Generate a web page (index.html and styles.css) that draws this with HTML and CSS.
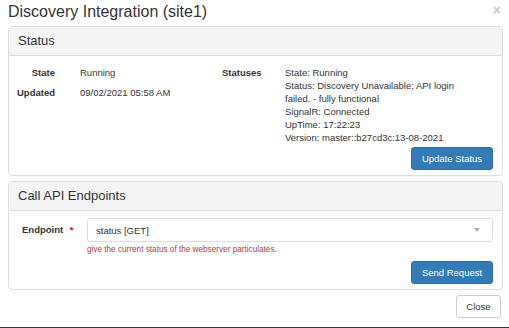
FILE: index.html
```html
<!DOCTYPE html>
<html>
<head>
<meta charset="utf-8">
<link rel="stylesheet" href="styles.css">
</head>
<body>
<div class="modal">
  <div class="modal-header">
    <h4 class="modal-title">Discovery Integration (site1)</h4>
    <span class="close">×</span>
  </div>
  <div class="modal-body">
    <div class="panel">
      <div class="panel-heading">Status</div>
      <div class="panel-body body-status">
        <div class="status-grid">
          <div class="col-left">
            <div class="row"><span class="lbl">State</span><span class="val">Running</span></div>
            <div class="row"><span class="lbl">Updated</span><span class="val">09/02/2021 05:58 AM</span></div>
          </div>
          <div class="col-right">
            <span class="lbl2">Statuses</span>
            <div class="statuses">
              <div>State: Running</div>
              <div>Status: Discovery Unavailable; API login failed. - fully functional</div>
              <div>SignalR: Connected</div>
              <div>UpTime: 17:22:23</div>
              <div>Version: master::b27cd3c:13-08-2021</div>
            </div>
          </div>
        </div>
        <div class="actions"><button class="btn btn-primary">Update Status</button></div>
      </div>
    </div>
    <div class="panel">
      <div class="panel-heading">Call API Endpoints</div>
      <div class="panel-body body-api">
        <div class="form-row">
          <label class="form-label">Endpoint <span class="req">*</span></label>
          <div class="field">
            <div class="select"><span>status [GET]</span><span class="caret"></span></div>
            <div class="help">give the current status of the webserver particulates.</div>
          </div>
        </div>
        <div class="actions"><button class="btn btn-primary">Send Request</button></div>
      </div>
    </div>
  </div>
  <div class="modal-footer"><button class="btn btn-default">Close</button></div>
</div>
</body>
</html>
```
FILE: styles.css
```css
* { box-sizing: border-box; }
html, body { margin: 0; padding: 0; background: #fff; }
body { font-family: "Liberation Sans", Arial, sans-serif; color: #333; width: 509px; height: 328px; overflow: hidden; }
.modal { width: 509px; height: 328px; border-bottom: 1px solid #333; }
.modal-header { display: flex; justify-content: space-between; align-items: flex-start; padding: 2px 8px 0 8px; height: 26px; }
.modal-title { margin: 0; font-weight: normal; font-size: 16px; line-height: 20px; color: #333; }
.close { color: #c8c8c8; font-size: 14px; font-weight: bold; line-height: 14px; margin-top: 1px; }
.modal-body { padding: 0 6px 0 8px; }
.panel { border: 1px solid #ddd; border-radius: 4px; margin-bottom: 5px; }
.panel-heading { background: #f5f5f5; border-bottom: 1px solid #ddd; height: 29px; padding: 6px 9px; font-size: 13px; line-height: 16px; border-radius: 3px 3px 0 0; }
.panel-body { font-size: 9.5px; line-height: 13px; }
.body-status { padding: 10px 9px 5px 8px; }
.body-api { padding: 7px 9px 5px 8px; }
.status-grid { display: flex; }
.col-left { width: 205px; flex-shrink: 0; }
.row { display: flex; margin-bottom: 7px; }
.lbl { width: 38px; text-align: right; font-weight: bold; }
.val { margin-left: 25px; }
.col-right { display: flex; }
.lbl2 { width: 63px; flex-shrink: 0; font-weight: bold; }
.statuses { width: 176px; }
.actions { display: flex; justify-content: flex-end; }
.status-grid + .actions { margin-top: 3px; }
.btn { font-family: inherit; font-size: 9.5px; border-radius: 3px; height: 23px; padding: 0; white-space: nowrap; cursor: pointer; }
.btn-primary { background: #337ab7; border: 1px solid #2e6da4; color: #fff; width: 82px; }
.form-row { display: flex; }
.form-label { width: 70px; flex-shrink: 0; padding-left: 5px; padding-top: 5px; font-weight: bold; font-size: 9.5px; }
.req { color: #d00; margin-left: 4px; }
.field { flex: 1; }
.select { height: 24px; border: 1px solid #ddd; border-radius: 3px; display: flex; align-items: center; justify-content: space-between; padding: 0 12px 0 8px; font-size: 9.5px; }
.caret { width: 0; height: 0; border-left: 3px solid transparent; border-right: 3px solid transparent; border-top: 4px solid #aaa; }
.help { color: #a94442; font-size: 8.2px; line-height: 10px; margin-top: 3px; margin-bottom: 6px; }
.modal-footer { display: flex; justify-content: flex-end; padding: 0 8px 0 0; }
.btn-default { background: #fff; border: 1px solid #ccc; color: #333; width: 45px; height: 23px; }
```
